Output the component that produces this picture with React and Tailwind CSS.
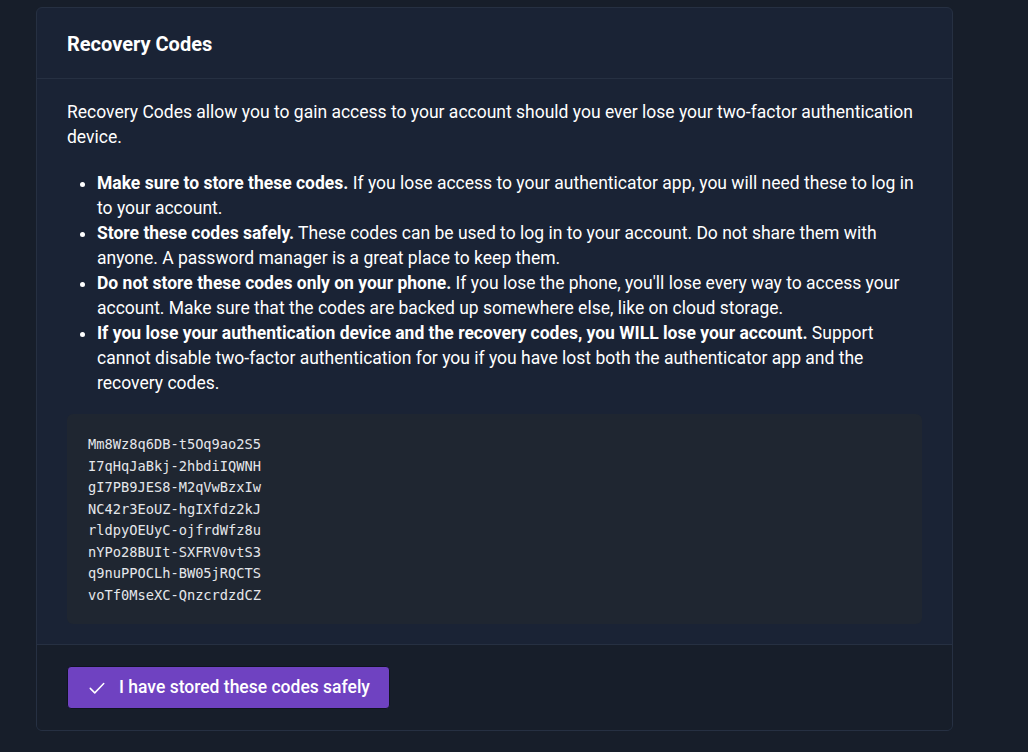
import React from 'react';

const codes = [
  'Mm8Wz8q6DB-t5Oq9ao2S5',
  'I7qHqJaBkj-2hbdiIQWNH',
  'gI7PB9JES8-M2qVwBzxIw',
  'NC42r3EoUZ-hgIXfdz2kJ',
  'rldpyOEUyC-ojfrdWfz8u',
  'nYPo28BUIt-SXFRV0vtS3',
  'q9nuPPOCLh-BW05jRQCTS',
  'voTf0MseXC-QnzcrdzdCZ',
];

const tips = [
  ['Make sure to store these codes.', ' If you lose access to your authenticator app, you will need these to log in to your account.'],
  ['Store these codes safely.', ' These codes can be used to log in to your account. Do not share them with anyone. A password manager is a great place to keep them.'],
  ['Do not store these codes only on your phone.', " If you lose the phone, you'll lose every way to access your account. Make sure that the codes are backed up somewhere else, like on cloud storage."],
  ['If you lose your authentication device and the recovery codes, you WILL lose your account.', ' Support cannot disable two-factor authentication for you if you have lost both the authenticator app and the recovery codes.'],
];

const App = () => {
  return (
    <div className="min-h-[752px] bg-[#171e2a] pt-[7px] pl-[36px] font-['Roboto',sans-serif] text-white">
      <div className="w-[917px] rounded-md border border-[#263042] bg-[#1a2335] overflow-hidden">
        <div className="h-[71px] flex items-center px-[30px] pt-[2px] border-b border-[#263042]">
          <h2 className="text-[20px] font-bold">Recovery Codes</h2>
        </div>

        <div className="px-[30px] pt-[21px] pb-[20px]">
          <p className="text-[17.5px] leading-[25px]">
            Recovery Codes allow you to gain access to your account should you ever lose your two-factor authentication device.
          </p>
          <ul className="list-disc pl-[30px] mt-[21px] text-[17.5px] leading-[25px]">
            {tips.map(([bold, rest]) => (
              <li key={bold}>
                <b className="font-bold">{bold}</b>
                {rest}
              </li>
            ))}
          </ul>

          <div className="mt-[18px] rounded-md bg-[#1f2631] px-[21px] pt-[20px] pb-[18px] font-['DejaVu_Sans_Mono',monospace] text-[13.7px] leading-[21.5px] text-[#e5e7eb]">
            {codes.map((c) => (
              <div key={c}>{c}</div>
            ))}
          </div>
        </div>

        <div className="border-t border-[#263042] bg-[#171e2a] px-[30px] pt-[21px] pb-[21px]">
          <button className="h-[43px] w-[323px] flex items-center gap-[13px] pl-[20px] rounded-[4px] border border-[#0f1420] bg-[#6f42c1] text-[17.5px] font-medium text-white">
            <svg width="18" height="18" viewBox="0 0 24 24" fill="none" stroke="currentColor" strokeWidth="2" strokeLinecap="round" strokeLinejoin="round">
              <path d="M3 12.5l6 6L21 6" />
            </svg>
            I have stored these codes safely
          </button>
        </div>
      </div>
    </div>
  );
};

export default App;
